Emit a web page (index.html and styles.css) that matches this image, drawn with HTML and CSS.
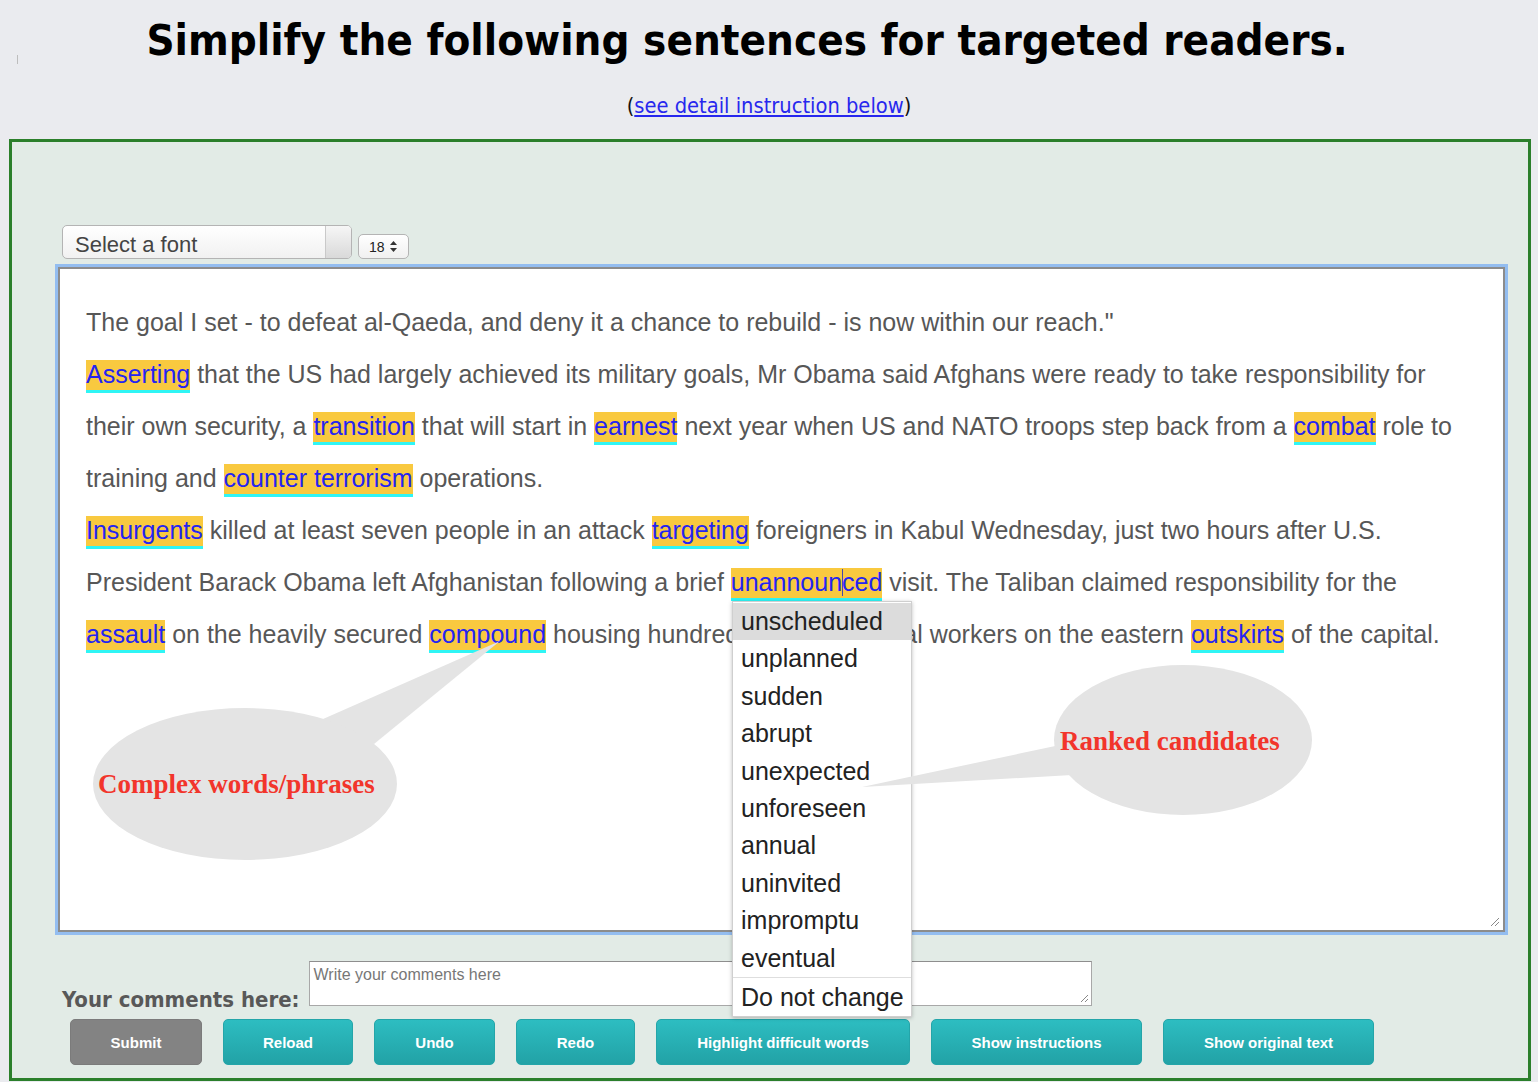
FILE: index.html
```html
<!DOCTYPE html>
<html lang="en">
<head>
<meta charset="utf-8">
<title>Simplify the following sentences</title>
<link rel="stylesheet" href="styles.css">
</head>
<body>
<div class="page">
  <span class="tick"></span>
  <header class="head">
    <h1 class="title">Simplify the following sentences for targeted readers.</h1>
    <p class="sub">(<a href="#instructions">see detail instruction below</a>)</p>
  </header>

  <main class="panel">
    <div class="toolbar">
      <div class="font-select">
        <span class="fs-label">Select a font</span>
        <span class="fs-btn"></span>
      </div>
      <div class="size-select">
        <span class="size-val">18</span>
        <svg class="size-arrows" width="7" height="11" viewBox="0 0 7 11"><path d="M3.5 0 L7 4 L0 4 Z M0 7 L7 7 L3.5 11 Z" fill="#333"/></svg>
      </div>
    </div>

    <div class="editor">
      <p class="line">The goal I set - to defeat al-Qaeda, and deny it a chance to rebuild - is now within our reach."</p>
      <p class="line"><span class="hl">Asserting</span> that the US had largely achieved its military goals, Mr Obama said Afghans were ready to take responsibility for<br>their own security, a <span class="hl">transition</span> that will start in <span class="hl">earnest</span> next year when US and NATO troops step back from a <span class="hl">combat</span> role to<br>training and <span class="hl">counter terrorism</span> operations.</p>
      <p class="line"><span class="hl">Insurgents</span> killed at least seven people in an attack <span class="hl">targeting</span> foreigners in Kabul Wednesday, just two hours after U.S.<br>President Barack Obama left Afghanistan following a brief <span class="hl">unannoun<span class="caret"></span>ced</span> visit. The Taliban claimed responsibility for the<br><span class="hl">assault</span> on the heavily secured <span class="hl">compound</span> housing hundreds of international workers on the eastern <span class="hl">outskirts</span> of the capital.</p>
      <svg class="grip" width="12" height="12" viewBox="0 0 12 12"><path d="M11 3 L3 11 M11 7 L7 11" stroke="#888" stroke-width="1"/></svg>
    </div>

    <div class="comments">
      <label class="c-label" for="cbox">Your comments here:</label>
      <div class="c-box" id="cbox">
        <span class="c-ph">Write your comments here</span>
        <svg class="grip small" width="10" height="10" viewBox="0 0 10 10"><path d="M9 2 L2 9 M9 6 L6 9" stroke="#888" stroke-width="1"/></svg>
      </div>
    </div>

    <div class="buttons">
      <button class="btn grey w-submit">Submit</button>
      <button class="btn w-reload">Reload</button>
      <button class="btn w-undo">Undo</button>
      <button class="btn w-redo">Redo</button>
      <button class="btn w-hl">Highlight difficult words</button>
      <button class="btn w-show">Show instructions</button>
      <button class="btn w-show">Show original text</button>
    </div>
  </main>

  <ul class="dropdown">
    <li class="opt active">unscheduled</li>
    <li class="opt">unplanned</li>
    <li class="opt">sudden</li>
    <li class="opt">abrupt</li>
    <li class="opt">unexpected</li>
    <li class="opt">unforeseen</li>
    <li class="opt">annual</li>
    <li class="opt">uninvited</li>
    <li class="opt">impromptu</li>
    <li class="opt">eventual</li>
    <li class="opt sep">Do not change</li>
  </ul>

  <svg class="callouts" width="1538" height="1082" viewBox="0 0 1538 1082">
    <g fill="#e4e4e4">
      <polygon points="314,723 500,641 374,744"/>
      <ellipse cx="245" cy="784" rx="152" ry="76"/>
      <polygon points="1060,745 862,787 1072,775"/>
      <ellipse cx="1183" cy="740" rx="129" ry="75"/>
    </g>
    <text class="co-text" x="98" y="793">Complex words/phrases</text>
    <text class="co-text" x="1060" y="750">Ranked candidates</text>
  </svg>
</div>
</body>
</html>
```

FILE: styles.css
```css
html, body {
  margin: 0;
  padding: 0;
  background: #eaebef;
}

.page {
  position: relative;
  width: 1538px;
  height: 1082px;
  overflow: hidden;
}

.tick {
  position: absolute;
  left: 17px;
  top: 55px;
  width: 1px;
  height: 9px;
  background: #bdbdbd;
}

.head {
  height: 139px;
  box-sizing: border-box;
  padding-top: 15px;
  text-align: center;
}

.title {
  margin: 0;
  padding-right: 44px;
  font-family: "DejaVu Sans Condensed", "DejaVu Sans", sans-serif;
  font-stretch: condensed;
  font-weight: bold;
  font-size: 43.5px;
  line-height: 50px;
  color: #000;
}

.sub {
  margin: 28px 0 0;
  font-family: "DejaVu Sans Condensed", "DejaVu Sans", sans-serif;
  font-stretch: condensed;
  font-size: 21.7px;
  line-height: 26px;
  color: #111;
}

.sub a {
  color: #2727ee;
  text-decoration: underline;
}

.panel {
  margin-left: 9px;
  width: 1522px;
  height: 942px;
  box-sizing: border-box;
  border: 3px solid #2b7f2b;
  background: #e2ebe6;
  padding: 83px 0 13px 0;
  display: flex;
  flex-direction: column;
}

.toolbar {
  display: flex;
  align-items: flex-end;
  gap: 6px;
  margin-left: 50px;
  height: 34px;
}

.font-select {
  display: flex;
  width: 290px;
  height: 34px;
  box-sizing: border-box;
  border: 1px solid #b4b4b4;
  border-radius: 5px;
  background: linear-gradient(#ffffff, #f1f1f1);
  overflow: hidden;
}

.fs-label {
  flex: 1;
  padding-left: 12px;
  font-family: "Liberation Sans", Arial, sans-serif;
  font-size: 22px;
  line-height: 37px;
  color: #444;
}

.fs-btn {
  width: 25px;
  border-left: 1px solid #c9c9c9;
  background: linear-gradient(#f6f6f6, #d9d9d9);
}

.size-select {
  display: flex;
  align-items: center;
  gap: 5px;
  width: 51px;
  height: 25px;
  box-sizing: border-box;
  border: 1px solid #b4b4b4;
  border-radius: 5px;
  background: linear-gradient(#ffffff, #f0f0f0);
  padding-left: 10px;
}

.size-val {
  font-family: "Liberation Sans", Arial, sans-serif;
  font-size: 14px;
  color: #222;
}

.editor {
  position: relative;
  margin: 8px 0 0 46px;
  width: 1447px;
  height: 665px;
  box-sizing: border-box;
  border: 2px solid #8c8c8c;
  box-shadow: 0 0 0 3px #93bdf0;
  background: #fff;
  padding: 27px 26px 0 26px;
}

.line {
  margin: 0;
  white-space: nowrap;
  font-family: "Liberation Sans", Arial, sans-serif;
  font-size: 25px;
  line-height: 52px;
  color: #575757;
}

.hl {
  background: #f9c93f;
  color: #2424f2;
  padding-bottom: 2px;
  border-bottom: 3px solid #2ff5f5;
}

.caret {
  display: inline-block;
  width: 1px;
  height: 27px;
  margin-right: -1px;
  vertical-align: -5px;
  background: #4848a8;
}

.grip {
  position: absolute;
  right: 3px;
  bottom: 3px;
}

.comments {
  display: flex;
  align-items: flex-end;
  gap: 9px;
  margin: 29px 0 0 50px;
  height: 45px;
}

.c-label {
  font-family: "DejaVu Sans Condensed", "DejaVu Sans", sans-serif;
  font-stretch: condensed;
  font-weight: bold;
  font-size: 22px;
  line-height: 24px;
  color: #585858;
  margin-bottom: -6px;
}

.c-box {
  position: relative;
  width: 783px;
  height: 45px;
  box-sizing: border-box;
  border: 1px solid #a8a8a8;
  border-top-color: #8e8e8e;
  background: #fff;
  padding: 4px 0 0 4px;
}

.c-ph {
  font-family: "Liberation Sans", Arial, sans-serif;
  font-size: 16px;
  color: #777;
}

.grip.small {
  right: 2px;
  bottom: 2px;
}

.buttons {
  display: flex;
  gap: 21px;
  margin: 13px 0 0 58px;
  height: 46px;
}

.btn {
  height: 46px;
  border: 1px solid #24a5a9;
  border-radius: 5px;
  background: linear-gradient(#2dbdc1, #22a2a6);
  color: #fff;
  font-family: "Liberation Sans", Arial, sans-serif;
  font-weight: bold;
  font-size: 15px;
  padding: 0;
  cursor: pointer;
}

.btn.grey {
  background: #838383;
  border-color: #7b7b7b;
}

.w-submit { width: 132px; }
.w-reload { width: 130px; }
.w-undo { width: 121px; }
.w-redo { width: 119px; }
.w-hl { width: 254px; }
.w-show { width: 211px; }

.dropdown {
  position: absolute;
  left: 732px;
  top: 601px;
  width: 180px;
  margin: 0;
  padding: 1px 0 0 0;
  box-sizing: border-box;
  list-style: none;
  background: #fff;
  border: 1px solid #cfcfcf;
  box-shadow: 0 1px 4px rgba(0, 0, 0, 0.25);
  z-index: 5;
}

.opt {
  padding-left: 8px;
  height: 37.4px;
  font-family: "Liberation Sans", Arial, sans-serif;
  font-size: 25px;
  line-height: 37.4px;
  color: #222;
}

.opt.active {
  background: #dcdcdc;
}

.opt.sep {
  border-top: 1px solid #dedede;
  height: 38px;
  line-height: 38px;
}

.callouts {
  position: absolute;
  left: 0;
  top: 0;
  pointer-events: none;
  z-index: 6;
}

.co-text {
  font-family: "Liberation Serif", "Times New Roman", serif;
  font-weight: bold;
  font-size: 27px;
  fill: #f2352b;
}
```
